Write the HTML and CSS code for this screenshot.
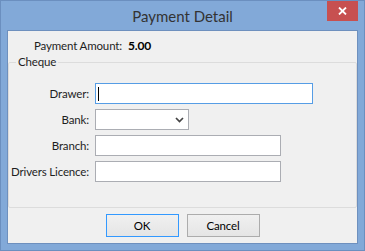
FILE: index.html
```html
<!DOCTYPE html>
<html lang="en">
<head>
<meta charset="utf-8">
<title>Payment Detail</title>
<link rel="stylesheet" href="styles.css">
</head>
<body>
<div class="window">
  <div class="titlebar">
    <div class="title">Payment Detail</div>
    <div class="close" aria-label="Close">
      <svg width="9" height="8" viewBox="0 0 9 8"><path d="M1 0.5 L8 7.5 M8 0.5 L1 7.5" stroke="#fff" stroke-width="1.8" fill="none"/></svg>
    </div>
  </div>
  <div class="client">
    <div class="amount">
      <span class="amount-label">Payment Amount:</span>
      <span class="amount-value">5.00</span>
    </div>
    <fieldset class="group">
      <legend class="group-title">Cheque</legend>
      <div class="form">
        <label class="label">Drawer:</label>
        <div class="textbox focused wide"><span class="caret"></span></div>
        <label class="label">Bank:</label>
        <div class="combo">
          <svg class="chevron" width="9" height="6" viewBox="0 0 9 6"><path d="M1 1 L4.5 4.5 L8 1" stroke="#444" stroke-width="1.7" fill="none"/></svg>
        </div>
        <label class="label">Branch:</label>
        <div class="textbox medium"></div>
        <label class="label">Drivers Licence:</label>
        <div class="textbox medium"></div>
      </div>
    </fieldset>
    <div class="footer">
      <button class="btn default">OK</button>
      <button class="btn">Cancel</button>
    </div>
  </div>
</div>
</body>
</html>
```
FILE: styles.css
```css
* { box-sizing: border-box; }
html, body { margin: 0; padding: 0; }
body {
  background: #80a7d6;
  font-family: Lato, "Noto Sans", sans-serif;
  font-size: 11.5px;
  letter-spacing: -0.15px;
  color: #1e1e1e;
}
.window {
  width: 365px;
  height: 251px;
  border: 1px solid #6b8fbf;
  background: #82a9d8;
  display: flex;
  flex-direction: column;
}
.titlebar {
  height: 29px;
  flex: none;
  display: grid;
  grid-template-columns: 1fr auto 1fr;
  padding: 0 6px;
}
.title {
  grid-column: 2;
  font-size: 15px;
  letter-spacing: 0;
  line-height: 29px;
  color: #333;
  padding-top: 1px;
}
.close {
  grid-column: 3;
  justify-self: end;
  width: 31px;
  height: 20px;
  background: #c75050;
  display: flex;
  align-items: center;
  justify-content: center;
}
.client {
  flex: 1;
  margin: 0 6px 6px 6px;
  border: 1px solid #6e90be;
  background: #f0f0f0;
  display: flex;
  flex-direction: column;
}
.amount {
  height: 24px;
  flex: none;
  padding: 7px 0 0 26px;
  line-height: 15px;
  display: flex;
  gap: 6px;
}
.amount-value { font-weight: bold; color: #000; font-size: 12px; }
.group {
  flex: 1;
  margin: 0;
  padding: 14px 0 0 0;
  min-width: 0;
  border: 1px solid #dcdcdc;
  border-radius: 2px;
}
.group-title {
  margin-left: 7px;
  padding: 0 2px;
  line-height: 14px;
}
.form {
  display: grid;
  grid-template-columns: 80px auto;
  column-gap: 6px;
  row-gap: 5px;
  justify-items: start;
  align-items: center;
}
.label {
  justify-self: end;
  line-height: 15px;
  white-space: nowrap;
}
.textbox, .combo {
  height: 21px;
  background: #fff;
  border: 1px solid #abadb3;
}
.wide { width: 218px; }
.medium { width: 186px; }
.focused { border-color: #569de5; display: flex; align-items: center; padding-left: 2px; }
.caret { width: 1px; height: 14px; background: #000; }
.combo {
  width: 94px;
  display: flex;
  align-items: center;
  justify-content: flex-end;
  padding-right: 4px;
}
.footer {
  height: 35px;
  flex: none;
  display: flex;
  justify-content: center;
  align-items: center;
  gap: 8px;
}
.btn {
  width: 73px;
  height: 23px;
  font: inherit;
  letter-spacing: inherit;
  color: #000;
  background: linear-gradient(#f0f0f0, #e5e5e5);
  border: 1px solid #acacac;
  padding: 0;
}
.btn.default { border-color: #3399ff; }
```
